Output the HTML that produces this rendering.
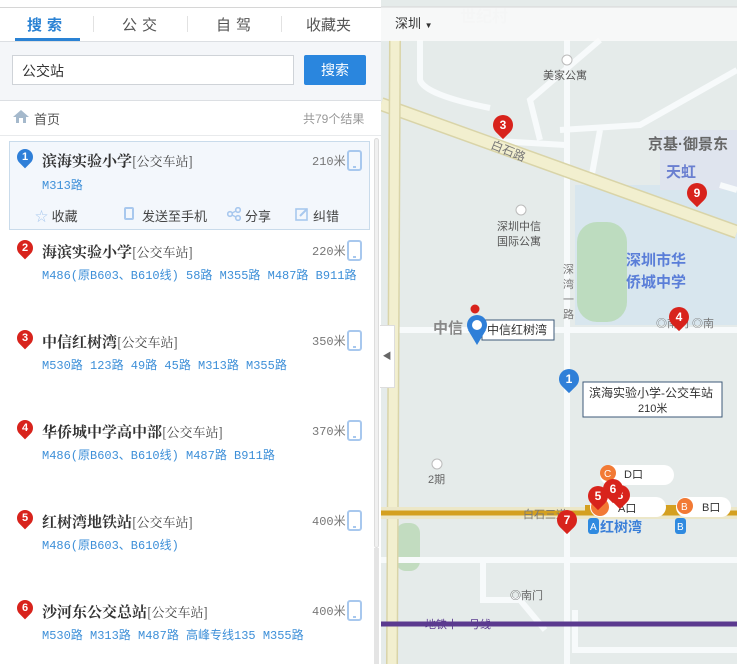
<!DOCTYPE html>
<html><head><meta charset="utf-8"><style>
*{margin:0;padding:0;box-sizing:border-box}
body{width:737px;height:664px;overflow:hidden;background:#fff;font-family:"Liberation Sans","Noto Sans CJK SC",sans-serif;position:relative}
.abs{position:absolute}
#left{position:absolute;left:0;top:0;width:381px;height:664px;background:#fff}
.tab{position:absolute;top:14px;font-size:15px;color:#555;letter-spacing:5px}
.pin{position:absolute;width:16px;height:16px;border-radius:50% 50% 50% 0;transform:rotate(-45deg);}
.num{position:absolute;width:16px;text-align:center;color:#fff;font-size:11px;font-weight:bold;line-height:16px}
.title{position:absolute;left:42px;font-size:15px;font-weight:bold;color:#333;font-family:"Noto Serif CJK SC","Liberation Serif",serif}
.title span{font-weight:normal;font-size:13px;color:#444}
.routes{position:absolute;left:42px;font-size:12px;color:#3d8fd8;font-family:"Liberation Mono","Noto Sans CJK SC",monospace;white-space:nowrap}
.dist{position:absolute;left:312px;font-size:12px;color:#777;font-family:"Liberation Mono","Noto Sans CJK SC",monospace}
.phone{position:absolute;left:347px;width:15px;height:21px;border:2px solid #a8c8ee;border-radius:3px}
.phone:after{content:"";position:absolute;left:4px;bottom:1px;width:3px;height:2px;background:#a8c8ee}
.mp{position:absolute;width:20px;height:20px;border-radius:50% 50% 50% 0;transform:rotate(-45deg);background:#d8231c}
.mn{position:absolute;width:20px;text-align:center;color:#fff;font-size:12px;font-weight:bold;line-height:20px}
</style></head><body>
<div id="left">
 <div class="abs" style="left:0;top:7px;width:381px;height:1px;background:#d6d6d6"></div>
 <div class="tab" style="left:27px;color:#2a82d4;font-weight:bold">搜索</div>
 <div class="tab" style="left:122px">公交</div>
 <div class="tab" style="left:216px">自驾</div>
 <div class="tab" style="left:306px;letter-spacing:0">收藏夹</div>
 <div class="abs" style="left:93px;top:16px;width:1px;height:16px;background:#e2e2e2"></div>
 <div class="abs" style="left:187px;top:16px;width:1px;height:16px;background:#e2e2e2"></div>
 <div class="abs" style="left:281px;top:16px;width:1px;height:16px;background:#e2e2e2"></div>
 <div class="abs" style="left:15px;top:38px;width:65px;height:3px;background:#2a82d4"></div>
 <div class="abs" style="left:0;top:41px;width:381px;height:60px;background:#f4f6f9;border-top:1px solid #dcdfe3;border-bottom:1px solid #dcdfe3"></div>
 <div class="abs" style="left:12px;top:55px;width:282px;height:30px;background:#fff;border:1px solid #cfd3d8;font-size:14px;color:#333;padding:5px 9px">公交站</div>
 <div class="abs" style="left:304px;top:55px;width:62px;height:30px;background:#2a86de;border-radius:2px;color:#fff;font-size:14px;text-align:center;line-height:30px">搜索</div>
 <svg class="abs" style="left:12px;top:109px" width="18" height="15"><path d="M9 1 L1 8 H4 V14 H14 V8 H17 Z" fill="#a5b9cc"/><rect x="7" y="9" width="4" height="5" fill="#fff"/></svg>
 <div class="abs" style="left:34px;top:109px;font-size:13px;color:#555">首页</div>
 <div class="abs" style="left:303px;top:110px;font-size:12px;color:#999">共79个结果</div>
 <div class="abs" style="left:0;top:135px;width:381px;height:1px;background:#e8eaec"></div>
 <div class="abs" style="left:374px;top:138px;width:5px;height:410px;background:#f0f0f0;border:1px solid #ddd;border-radius:3px"></div>
 <div class="abs" style="left:374px;top:548px;width:5px;height:116px;background:#e4e4e4"></div>
 <div class="abs" style="left:9px;top:141px;width:361px;height:89px;background:#f3f7fc;border:1px solid #c9dbeb"></div>
</div>
<!-- items -->
<div class="pin" style="left:17px;top:149px;background:#2f7fd8"></div><div class="num" style="left:17px;top:149px">1</div>
<div class="title" style="top:150px">滨海实验小学<span>[公交车站]</span></div>
<div class="routes" style="top:176px">M313路</div>
<div class="dist" style="top:152px">210米</div><div class="phone" style="top:150px"></div>
<div class="abs" style="left:35px;top:206px;font-size:13px;color:#444"><span style="color:#a8c8ee">☆</span> 收藏</div>
<div class="abs" style="left:124px;top:207px;width:10px;height:13px;border:2px solid #a8c8ee;border-radius:2px"></div>
<div class="abs" style="left:142px;top:206px;font-size:13px;color:#444">发送至手机</div>
<svg class="abs" style="left:227px;top:207px" width="14" height="14"><circle cx="3" cy="7" r="2.3" fill="none" stroke="#a8c8ee" stroke-width="1.6"/><circle cx="11" cy="3" r="2.3" fill="none" stroke="#a8c8ee" stroke-width="1.6"/><circle cx="11" cy="11" r="2.3" fill="none" stroke="#a8c8ee" stroke-width="1.6"/><path d="M5 6 L9 4 M5 8 L9 10" stroke="#a8c8ee" stroke-width="1.5"/></svg>
<div class="abs" style="left:245px;top:206px;font-size:13px;color:#444">分享</div>
<svg class="abs" style="left:295px;top:207px" width="14" height="14"><rect x="1" y="2" width="11" height="11" fill="none" stroke="#a8c8ee" stroke-width="1.6"/><path d="M5 9 L12 2" stroke="#a8c8ee" stroke-width="2"/></svg>
<div class="abs" style="left:313px;top:206px;font-size:13px;color:#444">纠错</div>

<div class="pin" style="left:17px;top:240px;background:#d8231c"></div><div class="num" style="left:17px;top:240px">2</div>
<div class="title" style="top:241px">海滨实验小学<span>[公交车站]</span></div>
<div class="routes" style="top:266px">M486(原B603、B610线) 58路 M355路 M487路 B911路</div>
<div class="dist" style="top:242px">220米</div><div class="phone" style="top:240px"></div>

<div class="pin" style="left:17px;top:330px;background:#d8231c"></div><div class="num" style="left:17px;top:330px">3</div>
<div class="title" style="top:331px">中信红树湾<span>[公交车站]</span></div>
<div class="routes" style="top:356px">M530路 123路 49路 45路 M313路 M355路</div>
<div class="dist" style="top:332px">350米</div><div class="phone" style="top:330px"></div>

<div class="pin" style="left:17px;top:420px;background:#d8231c"></div><div class="num" style="left:17px;top:420px">4</div>
<div class="title" style="top:421px">华侨城中学高中部<span>[公交车站]</span></div>
<div class="routes" style="top:446px">M486(原B603、B610线) M487路 B911路</div>
<div class="dist" style="top:422px">370米</div><div class="phone" style="top:420px"></div>

<div class="pin" style="left:17px;top:510px;background:#d8231c"></div><div class="num" style="left:17px;top:510px">5</div>
<div class="title" style="top:511px">红树湾地铁站<span>[公交车站]</span></div>
<div class="routes" style="top:536px">M486(原B603、B610线)</div>
<div class="dist" style="top:512px">400米</div><div class="phone" style="top:510px"></div>

<div class="pin" style="left:17px;top:600px;background:#d8231c"></div><div class="num" style="left:17px;top:600px">6</div>
<div class="title" style="top:601px">沙河东公交总站<span>[公交车站]</span></div>
<div class="routes" style="top:626px">M530路 M313路 M487路 高峰专线135 M355路</div>
<div class="dist" style="top:602px">400米</div><div class="phone" style="top:600px"></div>

<!-- map -->
<svg class="abs" style="left:381px;top:0" width="356" height="664" viewBox="381 0 356 664">
 <rect x="381" y="0" width="356" height="664" fill="#e5ebea"/>
 <rect x="575" y="185" width="162" height="140" fill="#d8e6ee"/>
 <rect x="660" y="130" width="77" height="60" fill="#dfe4ee"/>
 <rect x="577" y="222" width="50" height="100" rx="20" fill="#bddcbf"/>
 <rect x="396" y="523" width="24" height="48" rx="10" fill="#c2dcc0"/>
 <g stroke="#f7fafb" stroke-width="6" fill="none">
  <path d="M567 40 V664"/><path d="M381 330 H737"/><path d="M600 40 L530 100 L540 140"/>
  <path d="M420 40 V80 Q425 95 490 108"/><path d="M560 130 L640 125 L737 70"/>
  <path d="M480 140 L565 145 M600 130 L590 185"/><path d="M575 610 V650 H737"/>
  <path d="M483 560 V600 H520 L545 630"/><path d="M381 560 H737"/><path d="M720 185 L737 190"/>
 </g>
 <path d="M381 104 L737 232" stroke="#d9d4a8" stroke-width="14"/>
 <path d="M381 104 L737 232" stroke="#f2efcf" stroke-width="11"/>
 <path d="M395 40 L392 664" stroke="#d9d4a8" stroke-width="12"/>
 <path d="M395 40 L392 664" stroke="#f2efcf" stroke-width="9"/>
 <path d="M381 513 H737" stroke="#ece7c8" stroke-width="12"/>
 <path d="M381 513 H737" stroke="#d4a020" stroke-width="5"/>
 <rect x="585" y="505" width="100" height="10" fill="#d4a020"/>
 <path d="M381 624 H737" stroke="#5b3a8f" stroke-width="5"/>
 <g font-family="Liberation Sans,Noto Sans CJK SC,sans-serif">
  <text x="460" y="22" font-size="16" fill="#d6dcdc" font-weight="bold">世纪村</text>
  <text x="543" y="79" font-size="11" fill="#555">美家公寓</text>
  <circle cx="567" cy="60" r="5" fill="#fff" stroke="#bbb"/>
  <text x="490" y="148" font-size="12" fill="#777" transform="rotate(22 490 148)">白石路</text>
  <text x="648" y="149" font-size="15" fill="#666" font-weight="bold">京基·御景东</text>
  <text x="666" y="177" font-size="15" fill="#6a7fd0" font-weight="bold">天虹</text>
  <text x="497" y="230" font-size="11" fill="#555">深圳中信</text>
  <text x="497" y="245" font-size="11" fill="#555">国际公寓</text>
  <circle cx="521" cy="210" r="5" fill="#fff" stroke="#bbb"/>
  <text x="626" y="265" font-size="15" fill="#5a7ed8" font-weight="bold">深圳市华</text>
  <text x="626" y="287" font-size="15" fill="#5a7ed8" font-weight="bold">侨城中学</text>
  <text x="563" y="273" font-size="11" fill="#777">深</text><text x="563" y="288" font-size="11" fill="#777">湾</text><text x="563" y="303" font-size="11" fill="#777">一</text><text x="563" y="318" font-size="11" fill="#777">路</text>
  <text x="433" y="333" font-size="15" fill="#888" font-weight="bold">中信</text>
  <text x="656" y="327" font-size="11" fill="#777">◎南门 ◎南</text>
  <circle cx="437" cy="464" r="5" fill="#fff" stroke="#bbb"/>
  <text x="428" y="483" font-size="11" fill="#666">2期</text>
  <text x="523" y="518" font-size="11" fill="#777">白石三道</text>
  <text x="600" y="532" font-size="14" fill="#3a7fd8" font-weight="bold">红树湾</text>
  <rect x="588" y="518" width="11" height="16" rx="3" fill="#2f8ae0"/><text x="590" y="530" font-size="10" fill="#fff">A</text>
  <rect x="675" y="518" width="11" height="16" rx="3" fill="#2f8ae0"/><text x="677" y="530" font-size="10" fill="#fff">B</text>
  <text x="510" y="599" font-size="11" fill="#666">◎南门</text>
  <text x="425" y="628" font-size="11" fill="#5b3a8f">地铁十一号线</text>
 </g>
 <rect x="600" y="465" width="74" height="20" rx="10" fill="#fff"/><circle cx="608" cy="473" r="8" fill="#f27a35"/><text x="604" y="477" font-size="10" fill="#fff">C</text><text x="624" y="478" font-size="11" fill="#333">D口</text>
 <rect x="590" y="497" width="76" height="20" rx="10" fill="#fff"/><circle cx="600" cy="507" r="9" fill="#f27a35"/><text x="618" y="512" font-size="11" fill="#333">A口</text>
 <rect x="676" y="497" width="55" height="20" rx="10" fill="#fff"/><circle cx="685" cy="506" r="8" fill="#f27a35"/><text x="681" y="510" font-size="10" fill="#fff">B</text><text x="702" y="511" font-size="11" fill="#333">B口</text>
 <rect x="381" y="7" width="356" height="34" fill="#fafafa" opacity="0.85"/>
 <line x1="381" y1="7" x2="737" y2="7" stroke="#d6d6d6"/>
 <text x="395" y="28" font-size="13" fill="#333" font-family="Liberation Sans,Noto Sans CJK SC,sans-serif">深圳 <tspan font-size="8">▼</tspan></text>
 <rect x="583" y="382" width="139" height="35" fill="#fff" stroke="#3d5a78"/>
 <text x="589" y="397" font-size="12" fill="#333" font-family="Liberation Sans,Noto Sans CJK SC,sans-serif">滨海实验小学-公交车站</text>
 <text x="638" y="412" font-size="11" fill="#333" font-family="Liberation Sans,sans-serif">210米</text>
 <rect x="482" y="320" width="72" height="20" fill="#fff" stroke="#3d5a78"/>
 <text x="487" y="334" font-size="12" fill="#333" font-family="Liberation Sans,Noto Sans CJK SC,sans-serif">中信红树湾</text>
 <circle cx="477" cy="325" r="10" fill="#2f7fd8"/><path d="M468 330 L477 345 L486 330Z" fill="#2f7fd8"/><circle cx="477" cy="325" r="5" fill="#fff"/><circle cx="475" cy="309" r="4.5" fill="#d8231c"/>
</svg>
<div class="mp" style="left:559px;top:369px;background:#2f7fd8"></div><div class="mn" style="left:559px;top:369px">1</div>
<div class="mp" style="left:493px;top:115px"></div><div class="mn" style="left:493px;top:115px">3</div>
<div class="mp" style="left:687px;top:183px"></div><div class="mn" style="left:687px;top:183px">9</div>
<div class="mp" style="left:669px;top:307px"></div><div class="mn" style="left:669px;top:307px">4</div>
<div class="mp" style="left:557px;top:510px"></div><div class="mn" style="left:557px;top:510px">7</div>
<div class="mp" style="left:610px;top:485px"></div><div class="mn" style="left:610px;top:485px">8</div>
<div class="mp" style="left:603px;top:479px"></div><div class="mn" style="left:603px;top:479px">6</div>
<div class="mp" style="left:588px;top:486px"></div><div class="mn" style="left:588px;top:486px">5</div>
<div class="abs" style="left:380px;top:325px;width:15px;height:63px;background:#fff;border:1px solid #ddd;border-left:none;color:#666;font-size:9px;line-height:61px;text-align:center">◀</div>
</body></html>
